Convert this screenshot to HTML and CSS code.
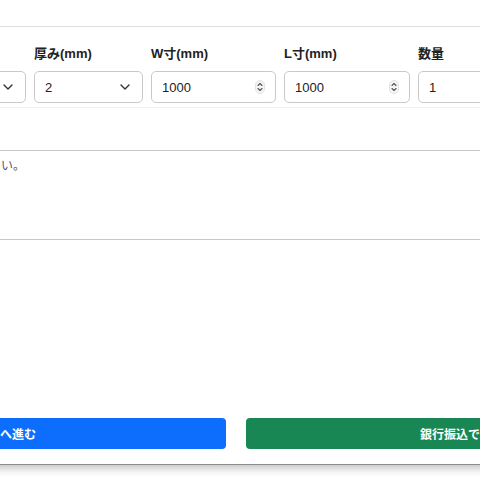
FILE: index.html
```html
<!DOCTYPE html>
<html lang="ja">
<head>
  <meta charset="UTF-8">
  <title>注文内容の確認</title>
  <link rel="stylesheet" href="styles.css">
</head>
<body>

<!-- 注文モーダル -->
<div class="modal">
  <div class="modal-header"></div>
  <div class="modal-body">
    <div class="spec-row">
      <div class="field">
        <label>材質</label>
        <div class="control">
          <select class="input select"><option>アクリル</option></select>
          <svg class="chevron" width="10" height="6" viewBox="0 0 10 6"><path d="M1 1l4 4 4-4" fill="none" stroke="#333" stroke-width="1.4" stroke-linecap="round" stroke-linejoin="round"/></svg>
        </div>
      </div>
      <div class="field">
        <label>厚み(mm)</label>
        <div class="control">
          <select class="input select"><option>2</option></select>
          <svg class="chevron" width="10" height="6" viewBox="0 0 10 6"><path d="M1 1l4 4 4-4" fill="none" stroke="#333" stroke-width="1.4" stroke-linecap="round" stroke-linejoin="round"/></svg>
        </div>
      </div>
      <div class="field">
        <label>W寸(mm)</label>
        <div class="control">
          <input class="input" type="text" value="1000">
          <svg class="stepper" width="10" height="14" viewBox="0 0 10 14"><rect x="0.5" y="0.5" width="9" height="13" rx="4.5" fill="#f4f4f4" stroke="#e2e2e2"/><path d="M3 5.5l2-2 2 2M3 8.5l2 2 2-2" fill="none" stroke="#555" stroke-width="1.1" stroke-linecap="round" stroke-linejoin="round"/></svg>
        </div>
      </div>
      <div class="field">
        <label>L寸(mm)</label>
        <div class="control">
          <input class="input" type="text" value="1000">
          <svg class="stepper" width="10" height="14" viewBox="0 0 10 14"><rect x="0.5" y="0.5" width="9" height="13" rx="4.5" fill="#f4f4f4" stroke="#e2e2e2"/><path d="M3 5.5l2-2 2 2M3 8.5l2 2 2-2" fill="none" stroke="#555" stroke-width="1.1" stroke-linecap="round" stroke-linejoin="round"/></svg>
        </div>
      </div>
      <div class="field">
        <label>数量</label>
        <div class="control">
          <input class="input" type="text" value="1">
          <svg class="stepper" width="10" height="14" viewBox="0 0 10 14"><rect x="0.5" y="0.5" width="9" height="13" rx="4.5" fill="#f4f4f4" stroke="#e2e2e2"/><path d="M3 5.5l2-2 2 2M3 8.5l2 2 2-2" fill="none" stroke="#555" stroke-width="1.1" stroke-linecap="round" stroke-linejoin="round"/></svg>
        </div>
      </div>
      <div class="field">
        <label>金額</label>
        <div class="control">
          <input class="input" type="text" value="¥12,000">
        </div>
      </div>
    </div>

    <textarea class="note" placeholder="ご要望がございましたら、ご記入ください。"></textarea>

    <div class="actions">
      <button class="btn btn-card">支払いへ進む</button>
      <button class="btn btn-bank">銀行振込で申し込む</button>
    </div>
  </div>
</div>
<div class="modal-shade"></div>

</body>
</html>
```

FILE: styles.css
```css
body {
  margin: 0;
  background: #fff;
  font-family: 'Liberation Sans', 'Noto Sans CJK JP', sans-serif;
  color: #222;
  overflow: hidden;
}
.modal {
  width: 924px;
  margin-left: -226px;
  background: #fff;
  border-bottom: 1px solid #8c8c8c;
}
.modal-shade {
  height: 12px;
  background: linear-gradient(#cfcfcf, #f4f4f4 60%, #fff);
}
.modal-header {
  height: 26px;
  border-bottom: 1px solid #dedede;
}
.modal-body {
  padding: 19px 0 15px;
}

/* 仕様入力 */
.spec-row {
  display: grid;
  grid-template-columns: 252px 109px 125px 126px 126px 122px;
  gap: 8px;
  padding-bottom: 4px;
  border-bottom: 1px solid #efefef;
}
.field label {
  display: block;
  font-size: 13px;
  font-weight: bold;
  line-height: 16px;
  margin-bottom: 9px;
}
.control {
  position: relative;
}
.input {
  display: block;
  box-sizing: border-box;
  width: 100%;
  height: 32px;
  padding: 0 10px;
  border: 1px solid #c9c9c9;
  border-radius: 5px;
  background: #fff;
  font-family: inherit;
  font-size: 13px;
  color: #222;
  appearance: none;
  -webkit-appearance: none;
  outline: none;
}
.chevron {
  position: absolute;
  right: 13px;
  top: 13px;
}
.stepper {
  position: absolute;
  right: 11px;
  top: 9px;
}

/* 備考 */
.note {
  display: block;
  box-sizing: border-box;
  width: 100%;
  height: 90px;
  margin-top: 42px;
  padding: 5px 10px;
  border: 1px solid #c8c8c8;
  border-radius: 4px;
  font-family: inherit;
  font-size: 12px;
  resize: none;
  outline: none;
}
.note::placeholder {
  color: #555;
}

/* ボタン */
.actions {
  display: flex;
  gap: 20px;
  margin-top: 178px;
}
.btn {
  box-sizing: border-box;
  width: 452px;
  height: 31px;
  padding: 0 6px;
  border: none;
  border-radius: 4px;
  color: #fff;
  font-family: inherit;
  font-size: 12px;
  font-weight: bold;
}
.btn-card {
  background: #0d6efd;
}
.btn-bank {
  background: #198754;
  padding-left: 10px;
}
```
